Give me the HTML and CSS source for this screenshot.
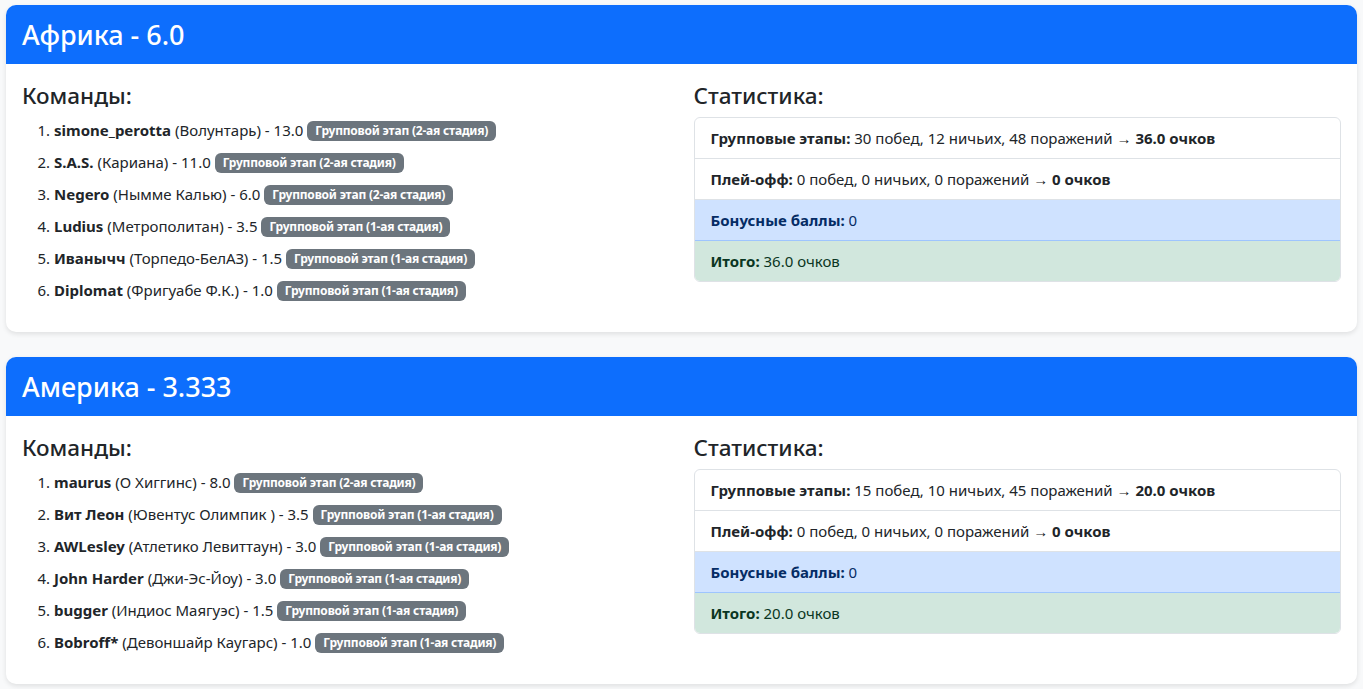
FILE: index.html
```html
<!DOCTYPE html>
<html>
  <head>
    <meta charset="utf-8">
    <title>Континенты</title>
    <link rel="stylesheet" href="styles.css">
  </head>
  <body>
    <div id='main'>

      <!-- Африка -->
      <div class='card'>
        <div class='card-header'>
          <h3>Африка - 6.0</h3>
        </div>
        <div class='card-body'>
          <div class='col'>
            <h4>Команды:</h4>
            <ol class='teams'>
              <li><b>simone_perotta</b> (Волунтарь) - 13.0 <span class='badge'>Групповой этап (2-ая стадия)</span></li>
              <li><b>S.A.S.</b> (Кариана) - 11.0 <span class='badge'>Групповой этап (2-ая стадия)</span></li>
              <li><b>Negero</b> (Нымме Калью) - 6.0 <span class='badge'>Групповой этап (2-ая стадия)</span></li>
              <li><b>Ludius</b> (Метрополитан) - 3.5 <span class='badge'>Групповой этап (1-ая стадия)</span></li>
              <li><b>Иванычч</b> (Торпедо-БелАЗ) - 1.5 <span class='badge'>Групповой этап (1-ая стадия)</span></li>
              <li><b>Diplomat</b> (Фригуабе Ф.К.) - 1.0 <span class='badge'>Групповой этап (1-ая стадия)</span></li>
            </ol>
          </div>
          <div class='col'>
            <h4>Статистика:</h4>
            <ul class='stats'>
              <li><b>Групповые этапы:</b> 30 побед, 12 ничьих, 48 поражений → <b>36.0 очков</b></li>
              <li><b>Плей-офф:</b> 0 побед, 0 ничьих, 0 поражений → <b>0 очков</b></li>
              <li class='bonus'><b>Бонусные баллы:</b> 0</li>
              <li class='total'><b>Итого:</b> 36.0 очков</li>
            </ul>
          </div>
        </div>
      </div>

      <!-- Америка -->
      <div class='card'>
        <div class='card-header'>
          <h3>Америка - 3.333</h3>
        </div>
        <div class='card-body'>
          <div class='col'>
            <h4>Команды:</h4>
            <ol class='teams'>
              <li><b>maurus</b> (О Хиггинс) - 8.0 <span class='badge'>Групповой этап (2-ая стадия)</span></li>
              <li><b>Вит Леон</b> (Ювентус Олимпик ) - 3.5 <span class='badge'>Групповой этап (1-ая стадия)</span></li>
              <li><b>AWLesley</b> (Атлетико Левиттаун) - 3.0 <span class='badge'>Групповой этап (1-ая стадия)</span></li>
              <li><b>John Harder</b> (Джи-Эс-Йоу) - 3.0 <span class='badge'>Групповой этап (1-ая стадия)</span></li>
              <li><b>bugger</b> (Индиос Маягуэс) - 1.5 <span class='badge'>Групповой этап (1-ая стадия)</span></li>
              <li><b>Bobroff*</b> (Девоншайр Каугарс) - 1.0 <span class='badge'>Групповой этап (1-ая стадия)</span></li>
            </ol>
          </div>
          <div class='col'>
            <h4>Статистика:</h4>
            <ul class='stats'>
              <li><b>Групповые этапы:</b> 15 побед, 10 ничьих, 45 поражений → <b>20.0 очков</b></li>
              <li><b>Плей-офф:</b> 0 побед, 0 ничьих, 0 поражений → <b>0 очков</b></li>
              <li class='bonus'><b>Бонусные баллы:</b> 0</li>
              <li class='total'><b>Итого:</b> 20.0 очков</li>
            </ul>
          </div>
        </div>
      </div>

    </div>
  </body>
</html>
```

FILE: styles.css
```css
* {
  margin: 0;
  padding: 0;
  box-sizing: border-box;
}
body {
  font-family: 'Segoe UI', 'Noto Sans', sans-serif;
  font-size: 15px;
  line-height: 24px;
  color: #212529;
  background-color: #f8f9fa;
}
#main {
  padding: 5px 6px;
}
.card {
  background-color: white;
  border-radius: 10px;
  box-shadow: 0 2px 5px rgba(0, 0, 0, 0.1);
  margin-bottom: 25px;
  overflow: hidden;
}
.card-header {
  background-color: #0d6efd;
  color: white;
  padding: 12px 16px;
}
.card-header h3 {
  font-size: 27px;
  font-weight: 500;
  line-height: 35px;
}
.card-body {
  display: flex;
  padding: 17px 16px 14px;
  gap: 24px;
}
.col {
  flex: 1;
}
h4 {
  font-size: 22.5px;
  font-weight: 500;
  line-height: 29px;
  margin-bottom: 7px;
}
.teams {
  padding-left: 32px;
  padding-top: 1px;
  margin-bottom: 16px;
}
.teams li {
  margin-bottom: 8px;
}
.badge {
  display: inline-block;
  background-color: #6c757d;
  color: white;
  font-size: 12px;
  font-weight: 700;
  line-height: 1;
  padding: 4px 8px;
  border-radius: 6px;
  vertical-align: 1px;
  letter-spacing: -0.2px;
}
.stats {
  list-style: none;
  border: 1px solid #dee2e6;
  border-radius: 6px;
  overflow: hidden;
}
.stats li {
  padding: 8px 16px;
  border-bottom: 1px solid #dee2e6;
}
.stats li:last-child {
  border-bottom: none;
}
.stats .bonus {
  background-color: #cfe2ff;
  color: #052c65;
  border-bottom-color: #9ec5fe;
}
.stats .total {
  background-color: #d1e7dd;
  color: #0a3622;
}
```
